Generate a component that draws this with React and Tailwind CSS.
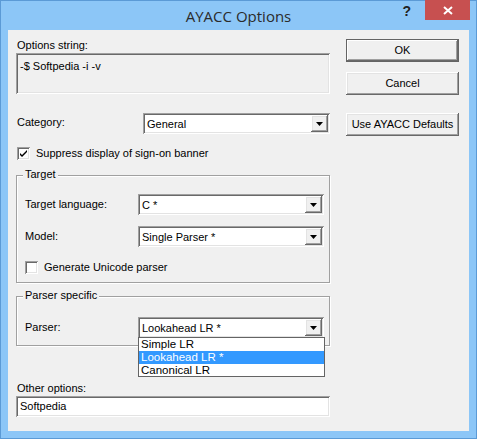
import React from "react";

const sunken =
  "shadow-[inset_1px_1px_0_#a0a0a0,inset_-1px_-1px_0_#ffffff,inset_2px_2px_0_#696969,inset_-2px_-2px_0_#e3e3e3]";
const raised =
  "shadow-[inset_-1px_-1px_0_#696969,inset_1px_1px_0_#ffffff,inset_-2px_-2px_0_#a0a0a0,inset_2px_2px_0_#e3e3e3]";

const Arrow = () => (
  <svg width="7" height="4" viewBox="0 0 7 4">
    <path d="M0 0h7L3.5 4z" fill="#000" />
  </svg>
);

const Combo = ({ value, width }) => (
  <div className={`relative flex items-center h-[21px] bg-white ${sunken} ${width}`}>
    <span className="pl-[4px] pt-[1px] flex-1 text-black">{value}</span>
    <div className={`w-[17px] h-[17px] mr-[2px] flex items-center justify-center bg-[#f0f0f0] ${raised}`}>
      <Arrow />
    </div>
  </div>
);

const CheckBox = ({ checked }) => (
  <div className={`w-[13px] h-[13px] bg-white flex items-center justify-center ${sunken}`}>
    {checked && (
      <svg width="7" height="7" viewBox="0 0 7 7">
        <path d="M0 2l2 2 5-5v2l-5 5-2-2z" fill="#000" transform="translate(0 1)" />
      </svg>
    )}
  </div>
);

const Button = ({ children, isDefault }) => (
  <button
    className={`h-[23px] w-[113px] bg-[#f0f0f0] text-black ${
      isDefault
        ? "border border-[#646464] shadow-[inset_-1px_-1px_0_#696969,inset_1px_1px_0_#ffffff,inset_-2px_-2px_0_#a0a0a0]"
        : raised
    }`}
  >
    {children}
  </button>
);

const Group = ({ label, className, children }) => (
  <div
    className={`relative border border-[#a0a0a0] shadow-[1px_1px_0_#ffffff,inset_1px_1px_0_#ffffff] ${className}`}
  >
    <span className="absolute -top-[8px] left-[6px] px-[2px] bg-[#f0f0f0] leading-[13px]">
      {label}
    </span>
    {children}
  </div>
);

export default function App() {
  return (
    <div
      className="w-[477px] h-[439px] bg-[#8cc6f7] border border-[#5b9ad6] flex flex-col text-[11px] leading-[13px] text-black"
      style={{ fontFamily: '"Liberation Sans", Arial, sans-serif' }}
    >
      {/* title bar */}
      <div className="h-[29px] flex items-start relative">
        <div
          className="absolute left-0 right-0 top-[5px] text-center text-[15px] leading-[20px] text-[#2b2b2b]"
          style={{ fontFamily: '"Open Sans", "Noto Sans", sans-serif' }}
        >
          AYACC Options
        </div>
        <div className="ml-auto flex items-start">
          <span className="mt-[4px] mr-[14px] text-[14px] font-bold text-[#222]">?</span>
          <div className="w-[45px] h-[20px] bg-[#c75050] flex items-center justify-center mr-[6px] -mt-[1px]">
            <svg width="10" height="9" viewBox="0 0 10 9">
              <path d="M1 1l8 7M9 1l-8 7" stroke="#fff" strokeWidth="2" />
            </svg>
          </div>
        </div>
      </div>

      {/* client area */}
      <div className="mx-[7px] h-[401px] bg-[#f0f0f0] flex relative">
        {/* left column */}
        <div className="ml-[8px] w-[314px] flex flex-col pt-[9px]">
          <div className="ml-[1px]">Options string:</div>
          <div className={`mt-[1px] h-[41px] pl-[4px] pt-[7px] ${sunken}`}>-$ Softpedia -i -v</div>

          <div className="mt-[19px] flex items-start">
            <span className="ml-[1px] mt-[3px] w-[126px]">Category:</span>
            <Combo value="General" width="w-[187px]" />
          </div>

          <div className="mt-[13px] flex items-center gap-[6px] ml-[1px]">
            <CheckBox checked />
            <span>Suppress display of sign-on banner</span>
          </div>

          <Group label="Target" className="mt-[15px] h-[108px] pl-[8px] pt-[18px]">
            <div className="flex items-start">
              <span className="mt-[4px] w-[113px]">Target language:</span>
              <Combo value="C *" width="w-[186px]" />
            </div>
            <div className="flex items-start mt-[11px]">
              <span className="mt-[4px] w-[113px]">Model:</span>
              <Combo value="Single Parser *" width="w-[186px]" />
            </div>
            <div className="mt-[14px] flex items-center gap-[6px]">
              <CheckBox />
              <span>Generate Unicode parser</span>
            </div>
          </Group>

          <Group label="Parser specific" className="mt-[13px] h-[50px] pl-[8px] pt-[20px]">
            <div className="flex items-start relative">
              <span className="mt-[4px] w-[113px]">Parser:</span>
              <Combo value="Lookahead LR *" width="w-[186px]" />
              {/* open dropdown list */}
              <div className="absolute left-[113px] top-[20px] w-[187px] border border-[#646464] bg-white z-10 text-[11.5px] leading-[13px]">
                <div className="h-[13px] pl-[2px]">Simple LR</div>
                <div className="h-[13px] pl-[2px] bg-[#3399ff] text-white">Lookahead LR *</div>
                <div className="h-[12px] pl-[2px]">Canonical LR</div>
              </div>
            </div>
          </Group>

          <div className="mt-[36px] ml-[1px]">Other options:</div>
          <div className={`mt-[1px] h-[21px] bg-white pl-[4px] pt-[4px] ${sunken}`}>Softpedia</div>
        </div>

        {/* right column */}
        <div className="ml-[16px] flex flex-col pt-[9px] gap-[10px]">
          <Button isDefault>OK</Button>
          <Button>Cancel</Button>
          <div className="mt-[8px]">
            <Button>Use AYACC Defaults</Button>
          </div>
        </div>
      </div>
    </div>
  );
}
